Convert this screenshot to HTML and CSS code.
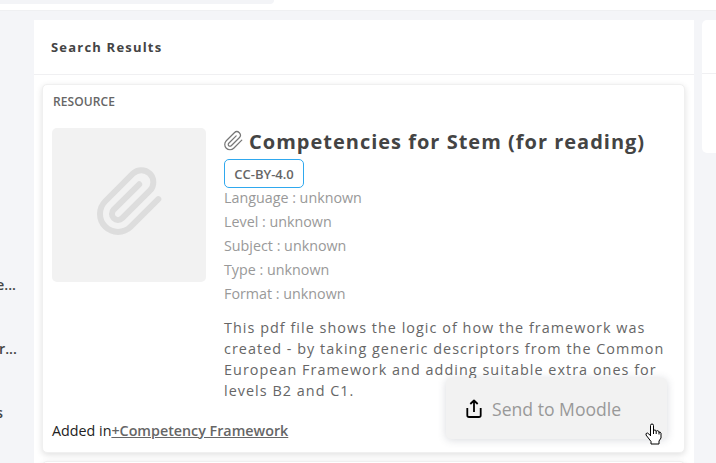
FILE: index.html
```html
<!DOCTYPE html>
<html lang="en">
<head>
<meta charset="utf-8">
<title>Search Results</title>
<link rel="stylesheet" href="styles.css">
</head>
<body>
<header class="topbar"><div class="search"></div></header>
<main class="layout">
  <aside class="sidebar">
    <span class="cut">e...</span>
    <span class="cut">r...</span>
    <span class="cut">s</span>
  </aside>
  <section class="panel">
    <h1 class="panel-title">Search Results</h1>
    <article class="card">
      <div class="kind">RESOURCE</div>
      <div class="body">
        <div class="thumb">
          <svg class="clip" viewBox="0 0 24 24"><path d="M21.44 11.05l-9.19 9.19a6 6 0 0 1-8.49-8.49l9.19-9.19a4 4 0 0 1 5.66 5.66l-9.2 9.19a2 2 0 0 1-2.83-2.83l8.49-8.48"/></svg>
        </div>
        <div class="info">
          <h2 class="title"><svg class="mini" viewBox="0 0 24 24"><path d="M21.44 11.05l-9.19 9.19a6 6 0 0 1-8.49-8.49l9.19-9.19a4 4 0 0 1 5.66 5.66l-9.2 9.19a2 2 0 0 1-2.83-2.83l8.49-8.48"/></svg><span>Competencies for Stem (for reading)</span></h2>
          <div class="license">CC-BY-4.0</div>
          <ul class="meta">
            <li>Language : unknown</li>
            <li>Level : unknown</li>
            <li>Subject : unknown</li>
            <li>Type : unknown</li>
            <li>Format : unknown</li>
          </ul>
          <p class="desc">This pdf file shows the logic of how the framework was<br>created - by taking generic descriptors from the Common<br>European Framework and adding suitable extra ones for<br>levels B2 and C1.</p>
        </div>
      </div>
      <div class="added">Added in<a class="link">+Competency Framework</a></div>
      <div class="menu">
        <svg class="share" viewBox="0 0 16 20"><path d="M1.300 9v7.200q0 1.800 1.800 1.800h9.800q1.800 0 1.800-1.800V9M8 13V2M4.300 5L8 1.500 11.700 5"/></svg>
        <span>Send to Moodle</span>
        <svg class="hand" viewBox="0 0 17 22"><path d="M5.500 13V2.500q0-1.500 1.500-1.500t1.500 1.500V8q0-1 1.300-1t1.400 1.500q.3-1 1.500-.8t1.300 1.500q1.500-.5 2 1V15l-2 3v3H6v-2.500L1 12q-.5-2 1.500-2l3 2.500M8.500 8v3M11.200 8.500V11M14 9v2.500"/></svg>
      </div>
    </article>
    <div class="card next"></div>
  </section>
  <aside class="side-card"><div class="side-head"></div></aside>
</main>
</body>
</html>
```
FILE: styles.css
```css
* { box-sizing: border-box; }
body { margin: 0; width: 716px; height: 463px; overflow: hidden; background: #f4f5f8; font-family: "Open Sans", "Noto Sans", sans-serif; color: #444; }
.topbar { height: 11px; background: #fff; border-bottom: 1px solid #eff0f2; }
.search { width: 274px; height: 4px; background: #f3f4f7; border-radius: 0 0 4px 0; }
.layout { display: flex; margin-top: 9px; height: 443px; overflow: hidden; }
.sidebar { width: 34px; flex: none; padding-top: 253px; font-size: 14.300px; font-weight: 600; line-height: 24px; }
.cut { display: block; height: 64px; margin-left: -4px; white-space: nowrap; }
.cut:nth-child(2) { margin-left: -1px; }
.panel { width: 660px; flex: none; background: #fff; }
.panel-title { margin: 0; height: 55px; padding-left: 17px; border-bottom: 1px solid #f0f0f2; font-size: 13px; line-height: 55px; letter-spacing: 1.200px; font-weight: 700; }
.card { position: relative; width: 643px; height: 369px; margin: 9px 0 0 8px; padding: 8px 9px; border: 1px solid #f0f0f0; border-radius: 5px; box-shadow: 0 2px 6px rgba(0,0,0,.12); background: #fff; }
.next { margin-top: 8px; }
.kind { height: 35px; padding-left: 1px; line-height: 17px; font-size: 12px; letter-spacing: .1px; font-weight: 600; color: #666; }
.body { display: flex; height: 293px; }
.thumb { width: 154px; height: 154px; margin-right: 18px; border-radius: 5px; background: #f2f2f2; padding: 38px 0 0 42px; }
.clip { display: block; width: 72px; height: 72px; fill: none; stroke: #ddd; stroke-width: 2; stroke-linecap: round; }
.info { white-space: nowrap; }
.title { display: flex; margin: 0; height: 31px; font-size: 20px; line-height: 28px; letter-spacing: 1px; font-weight: 700; }
.mini { width: 21px; height: 22px; margin: 2px 5px 0 -1px; fill: none; stroke: #777; stroke-width: 1.400; stroke-linecap: round; }
.license { width: 80px; height: 29px; border: 1px solid #2fa8ee; border-radius: 5px; text-align: center; font-size: 13px; line-height: 29px; font-weight: 600; color: #666; }
.meta { margin: -2px 0 0; padding: 0; list-style: none; font-size: 14.300px; line-height: 24px; color: #999; }
.desc { margin: 11px 0 0; font-size: 14.400px; line-height: 21px; letter-spacing: 1.030px; color: #666; }
.added { font-size: 14.300px; line-height: 20px; color: #222; }
.link { font-weight: 600; color: #666; text-decoration: underline; }
.menu { position: absolute; left: 403px; top: 293px; width: 221px; height: 61px; display: flex; align-items: center; padding-left: 20px; border-radius: 5px; background: #f2f2f2; box-shadow: 0 1px 8px rgba(60,70,90,.2); font-size: 17.600px; color: #999; }
.share { width: 16px; height: 20px; margin-right: 10px; fill: none; stroke: #000; stroke-width: 1.800; stroke-linejoin: round; }
.hand { position: absolute; left: 199px; top: 45px; width: 17px; height: 22px; fill: #fff; stroke: #000; }
.side-card { width: 30px; height: 133px; margin-left: 8px; flex-shrink: 0; border-radius: 5px; background: #fff; }
.side-head { height: 54px; border-bottom: 1px solid #f0f0f2; }
```
